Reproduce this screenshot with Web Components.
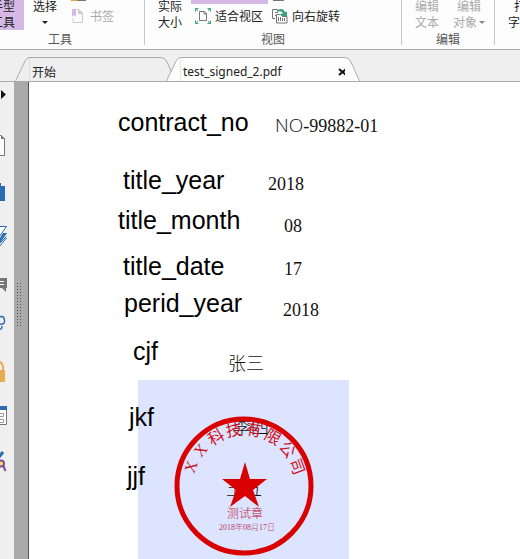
<!DOCTYPE html>
<html lang="zh-CN">
<head>
<meta charset="utf-8">
<title>test_signed_2.pdf</title>
<style>
html, body { margin: 0; height: 100%; }
body { font-family: "Noto Sans CJK SC", sans-serif; font-size: 12px; overflow: hidden; background: #fff; }
</style>
</head>
<body>
<pdf-app></pdf-app>
<script>
function define(name, html, setup) {
  const t = document.createElement('template');
  t.innerHTML = html;
  customElements.define(name, class extends HTMLElement {
    constructor() {
      super();
      this.attachShadow({ mode: 'open' }).appendChild(t.content.cloneNode(true));
    }
    connectedCallback() { if (setup) setup(this, this.shadowRoot); }
  });
}

define('tool-group', `
<style>
:host { display: flex; flex-direction: column; justify-content: flex-end; flex: none; box-sizing: border-box; height: 45px; margin-bottom: 4px; border-right: 1px solid #c8c8c8; color: #222; }
.tools { display: flex; align-items: flex-end; height: 30px; }
h2 { margin: 0; height: 15px; font: inherit; line-height: 18px; text-align: center; color: #555; }
</style>
<div class="tools"><slot></slot></div><h2></h2>`,
(el, r) => { r.querySelector('h2').textContent = el.getAttribute('label'); });

define('tall-tool', `
<style>
:host { display: block; flex: none; }
button { display: flex; flex-direction: column; justify-content: flex-end; align-items: center; width: 100%; height: 48px; padding: 0; border: 0; background: none; font: inherit; line-height: 16px; color: inherit; white-space: nowrap; }
:host([selected]) button { background: #d5b8e6; }
:host([disabled]) button { color: #aaa; }
span { display: flex; align-items: center; gap: 2px; height: 16px; }
i { width: 0; border: 3px solid transparent; border-top: 3px solid currentColor; border-bottom: 0; }
:host([disabled]) i { border-top-color: #888; }
</style>
<button><span class="a"></span><span class="b"></span></button>`,
(el, r) => {
  r.querySelector('.a').textContent = el.getAttribute('first');
  r.querySelector('.b').textContent = el.getAttribute('second') || '';
  if (el.hasAttribute('menu')) r.querySelector('.b').appendChild(document.createElement('i'));
  r.querySelector('button').disabled = el.hasAttribute('disabled');
});

define('row-tool', `
<style>
:host { display: flex; flex-direction: column; height: 30px; justify-content: space-between; flex: none; }
.prev { height: 4px; overflow: hidden; display: flex; }
button { display: flex; align-items: center; gap: 4px; height: 26px; padding: 0 4px 3px; border: 0; background: none; font: inherit; line-height: 16px; color: inherit; white-space: nowrap; }
:host([disabled]) button { color: #aaa; }
</style>
<div class="prev"><slot name="above"></slot></div>
<button><slot></slot></button>`,
(el, r) => { r.querySelector('button').disabled = el.hasAttribute('disabled'); });

define('ribbon-bar', `
<style>
:host { display: flex; align-items: flex-end; height: 49px; overflow: hidden; background: #fdfdfd; border-bottom: 1px solid #aaa; flex: none; }
.g1 { width: 169px; margin-left: -24px; }
.g2 { width: 257px; }
.g3 { width: 93px; }
.g4 { width: 100px; }
.hand { width: 42px; margin-left: 6px; }
.select { width: 42px; }
.actual { width: 42px; margin-left: 4px; }
.etext { width: 42px; margin-left: 4px; }
.eobj { width: 42px; }
.type { width: 50px; }
.bar { width: 77px; height: 4px; background: #d5b8e6; }
.mix { width: 15px; height: 1px; margin-left: 5px; background: linear-gradient(90deg, #e8a840 6px, #777 6px); }
.gray { width: 11px; height: 1px; margin-left: 5px; background: #777; }
svg { flex: none; }
</style>
<tool-group class="g1" label="工具">
  <tall-tool class="hand" selected first="手型" second="工具"></tall-tool>
  <tall-tool class="select" first="选择" second="" menu></tall-tool>
  <row-tool disabled><div slot="above" class="mix"></div>
    <svg width="16" height="16" viewBox="0 0 16 16" fill="none"><path d="M6 1.500h3l3.500 3.500v9.500h-9.500V10" stroke="#ccc"/><path d="M8 1v5h5z" fill="#ccc"/><path d="M2 1h4v8L4 7 2 9z" fill="#d5b8e6"/></svg><span>书签</span>
  </row-tool>
</tool-group>
<tool-group class="g2" label="视图">
  <tall-tool class="actual" first="实际" second="大小"></tall-tool>
  <row-tool><div slot="above" class="bar"></div>
    <svg width="16" height="16" viewBox="0 0 16 16" fill="none"><path d="M4.500 3.500h5l2 2v7h-7zM9 3v3h3" stroke="#777"/><path d="M.5 3.500v-3h3M12.500.5h3v3M.5 12.500v3h3M12.500 15.500h3v-3M1 1l2 2M15 1l-2 2M1 15l2-2M15 15l-2-2" stroke="#3aa37a"/></svg><span>适合视区</span>
  </row-tool>
  <row-tool><div slot="above" class="gray"></div>
    <svg width="16" height="16" viewBox="0 0 16 16" fill="none"><path d="M3 10.500H.5v-9h5M3 4.500h3M3 7.500h2" stroke="#777"/><path d="M4.500 6.500h4l2 2h4.500v6.500h-10.500zM6.500 9v4M8.500 9v4M10.500 10v3M12.500 10v3" stroke="#777"/><path d="M5 2q6-3 8 2h2v4H9V6l2-1Q9 2 5 4z" fill="#3aa37a"/></svg><span>向右旋转</span>
  </row-tool>
</tool-group>
<tool-group class="g3" label="编辑">
  <tall-tool class="etext" disabled first="编辑" second="文本"></tall-tool>
  <tall-tool class="eobj" disabled first="编辑" second="对象" menu></tall-tool>
</tool-group>
<tool-group class="g4" label="">
  <tall-tool class="type" first="打" second="字机"></tall-tool>
</tool-group>`);

define('doc-tab', `
<style>
:host { display: flex; height: 24px; margin-right: -10px; flex: none; position: relative; --fill: #efefef; }
:host([active]) { --fill: #fdfdfd; }
svg { flex: none; width: 15px; height: 24px; fill: var(--fill); stroke: #aaa; display: block; }
.mid { flex: 1; display: flex; align-items: center; border-top: 1px solid #aaa; background: var(--fill); }
button { border: 0; background: none; padding: 0; font: inherit; color: #222; }
.name { flex: 1; text-align: left; margin-left: 2px; padding-top: 4px; line-height: 18px; white-space: nowrap; }
.close { display: none; width: 10px; height: 20px; margin-right: -3px; padding-top: 5px; }
:host([active]) .close { display: block; }
.close svg { width: 10px; height: 10px; stroke: #111; stroke-width: 2; }
</style>
<svg viewBox="0 0 15 24"><path d="M.5 24L10 4Q12 .5 15 .5V24" /><path d="M15 1v23" stroke="var(--fill)"/></svg>
<div class="mid"><button class="name"><slot></slot></button>
<button class="close" aria-label="关闭"><svg viewBox="0 0 10 10"><path d="M1 2l7 6M8 2L1 8"/></svg></button></div>
<svg viewBox="0 0 15 24"><path d="M0 .500Q4 .500 6 5L14.500 24H0"/><path d="M0 1v23H14" stroke="var(--fill)"/></svg>`);

define('tab-strip', `
<style>
:host { display: flex; align-items: flex-end; height: 31px; padding-left: 15px; background: #efefef; border-bottom: 1px solid #aaa; flex: none; }
.start { width: 161px; }
.file { width: 194px; font-family: "Noto Sans", sans-serif; }
</style>
<doc-tab class="start">开始</doc-tab><doc-tab class="file" active>test_signed_2.pdf</doc-tab>`);

define('side-nav', `
<style>
:host { display: flex; flex-direction: column; width: 14px; background: #efefef; flex: none; overflow: hidden; }
button { display: block; flex: none; width: 14px; height: 45px; padding: 0; border: 0; background: none; }
button:first-of-type { height: 42px; }
svg { display: block; width: 14px; height: 100%; fill: none; }
</style>
<button aria-label="展开"><svg viewBox="0 0 14 42"><path d="M1 8l5 4.500L1 17z" fill="#111"/></svg></button>
<button aria-label="页面"><svg viewBox="0 0 14 45"><path d="M-4 11.500H1L4.500 15v16.500H-4" fill="#fff" stroke="#777"/><path d="M1 11v4h4z" fill="#777"/></svg></button>
<button aria-label="书签"><svg viewBox="0 0 14 45"><path d="M0 14h1v3h4v15H0z" fill="#2a6cb4"/></svg></button>
<button aria-label="图层"><svg viewBox="0 0 14 45"><path d="M-4 12.500H6.500L-1 23M-1 30L6.500 22.500" fill="#fff" stroke="#2a6cb4"/><path d="M7 19L0 29v-5l3-5z" fill="#2a6cb4"/><path d="M6.500 24L-1 33" stroke="#2a6cb4"/></svg></button>
<button aria-label="注释"><svg viewBox="0 0 14 45"><path d="M-2 19H7v10H6v4l-4-4h-4z" fill="#777"/><path d="M0 22.500h4M0 25.500h4" stroke="#fff"/></svg></button>
<button aria-label="附件"><svg viewBox="0 0 14 45"><path d="M-1 13Q4 11 4.500 16T0 20M-1 25Q2 26 2 22" stroke="#2a6cb4" stroke-width="1.500"/></svg></button>
<button aria-label="安全"><svg viewBox="0 0 14 45"><path d="M-4 22v-4Q-4 13-1 13T3 18v5" stroke="#e8ac50" stroke-width="2"/><path d="M-4 21H5v12h-9z" fill="#e8ac50"/></svg></button>
<button aria-label="表单"><svg viewBox="0 0 14 45"><path d="M-3 13H6.500v17.500H-3" fill="#fff" stroke="#777"/><path d="M-3 12H7v4H-3z" fill="#2a6cb4"/><path d="M-1 19.500h4.500v3H-1M-1 25.500h4.500v3H-1" stroke="#999"/></svg></button>
<button aria-label="签名"><svg viewBox="0 0 14 45"><path d="M-1 18L3 13" stroke="#2a6cb4" stroke-width="3"/><circle cx="1" cy="24.500" r="3" fill="#ffdf60" stroke="#7d4ba0" stroke-width="2"/><path d="M3 26l2.500 6" stroke="#7d4ba0" stroke-width="2"/></svg></button>`);

define('split-bar', `
<style>
:host { display: flex; align-items: center; justify-content: center; width: 14px; flex: none; background: #aaa; border-right: 1px solid #555; }
svg { display: block; margin: 0 4px 32px 0; }
</style><svg width="4" height="44"><path d="M.5 0v44M3.500 0v44" stroke="#555" stroke-dasharray="1 2"/></svg>`);

define('company-seal', `
<style>
:host { display: block; width: 140px; height: 140px; }
svg { display: block; width: 100%; height: 100%; overflow: visible; font-family: "Liberation Serif", "Noto Sans CJK SC", serif; fill: #d80000; }
.name { font-size: 16px; font-weight: 400; fill: #d01020; }
.use { font-size: 12px; font-weight: 300; fill: #c02040; text-anchor: middle; }
.date { font-size: 8px; font-weight: 300; fill: #b84060; text-anchor: middle; }
</style>
<svg viewBox="0 0 140 140">
<circle cx="70" cy="70" r="67" fill="none" stroke="#d80000" stroke-width="5"/>
<path d="M71 46l5 17h17L79 74l6 17-14-11-15 11 6-17-14-11h18z"/>
<text class="name">XX科技有限公司</text>
<text class="use" x="71" y="102">测试章</text>
<text class="date" x="73" y="114">2018年08月17日</text>
</svg>`,
(el, r) => {
  const t = r.querySelector('.name'), s = t.textContent, xs = [], ys = [], rot = [];
  const radius = 51, step = 20;
  [...s].forEach((c, i) => {
    const deg = (i - (s.length - 1) / 2) * step, a = deg * Math.PI / 180;
    const half = c === 'X' ? 6 : 8;
    xs.push(Math.round(70 + radius * Math.sin(a) - half * Math.cos(a)));
    ys.push(Math.round(70 - radius * Math.cos(a) - half * Math.sin(a)));
    rot.push(deg);
  });
  t.setAttribute('x', xs.join(' '));
  t.setAttribute('y', ys.join(' '));
  t.setAttribute('rotate', rot.join(' '));
});

define('pdf-page', `
<style>
:host { display: block; flex: 1; position: relative; overflow: hidden; background: #fff; color: #000; }
.l, .v, .sig, company-seal { position: absolute; white-space: nowrap; }
.l { font: 25px/28px "Liberation Sans", Arial, sans-serif; }
.v { font: 300 18px/20px "Liberation Serif", "Noto Sans CJK SC", serif; color: #111; }
.v b { font-family: "Open Sans", sans-serif; font-weight: 300; font-size: 19px; }
.sig { background: #dce4ff; left: 109px; top: 298px; width: 211px; bottom: 0; }
company-seal { left: 145px; top: 334px; }
</style>
<div class="sig"></div>
<span class="l" style="left:89px;top:26px">contract_no</span><span class="v" style="left:246px;top:33px"><b>NO</b>-99882-01</span>
<span class="l" style="left:94px;top:84px">title_year</span><span class="v" style="left:239px;top:92px">2018</span>
<span class="l" style="left:89px;top:124px">title_month</span><span class="v" style="left:255px;top:134px">08</span>
<span class="l" style="left:94px;top:170px">title_date</span><span class="v" style="left:255px;top:177px">17</span>
<span class="l" style="left:95px;top:207px">perid_year</span><span class="v" style="left:254px;top:218px">2018</span>
<span class="l" style="left:104px;top:255px">cjf</span><span class="v" style="left:199px;top:272px">张三</span>
<span class="l" style="left:100px;top:321px">jkf</span><span class="v" style="left:204px;top:336px">李四</span>
<span class="l" style="left:98px;top:380px">jjf</span><span class="v" style="left:197px;top:397px">王五</span>
<company-seal></company-seal>`);

define('pdf-app', `
<style>
:host { display: flex; flex-direction: column; height: 100vh; }
main { display: flex; flex: 1; min-height: 0; }
</style>
<ribbon-bar></ribbon-bar><tab-strip></tab-strip>
<main><side-nav></side-nav><split-bar></split-bar><pdf-page></pdf-page></main>`);
</script>
</body>
</html>
